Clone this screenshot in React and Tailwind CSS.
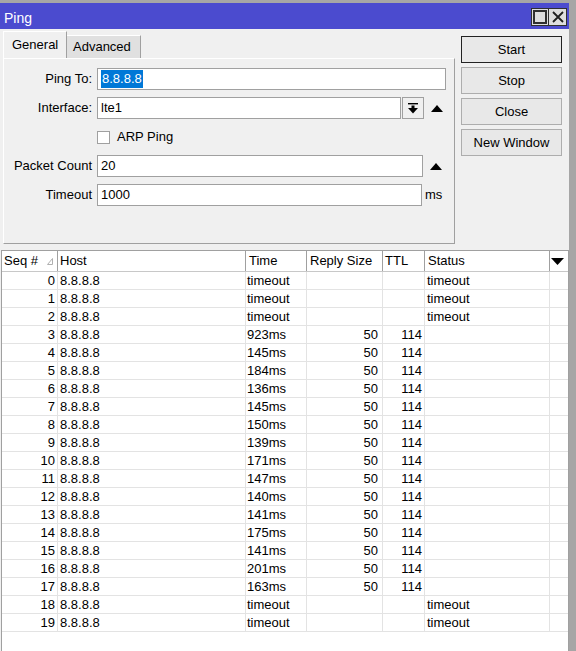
const results = [
  [0, null],
  [1, null],
  [2, null],
  [3, "923ms"],
  [4, "145ms"],
  [5, "184ms"],
  [6, "136ms"],
  [7, "145ms"],
  [8, "150ms"],
  [9, "139ms"],
  [10, "171ms"],
  [11, "147ms"],
  [12, "140ms"],
  [13, "141ms"],
  [14, "175ms"],
  [15, "141ms"],
  [16, "201ms"],
  [17, "163ms"],
  [18, null],
  [19, null],
];

function UpTriangle() {
  return (
    <svg width="12" height="7" viewBox="0 0 12 7" className="shrink-0">
      <path d="M0 7 L6 0 L12 7 Z" fill="#000" />
    </svg>
  );
}

function Field({ label, children }) {
  return (
    <div className="flex h-[22px] items-center">
      <div className="w-[88px] shrink-0 text-right">{label}</div>
      <div className="ml-[5px] flex h-full items-center">{children}</div>
    </div>
  );
}

function Box({ className, children }) {
  return (
    <div className={"flex h-full items-center border border-[#a0a0a0] bg-white pl-[3px] " + className}>
      {children}
    </div>
  );
}

export default function App() {
  return (
    <div className="h-[651px] w-[576px] overflow-hidden border-t-[3px] border-r-[7px] border-[#a6a6a6] bg-[#f0f0f0] font-['Liberation_Sans',Arial,sans-serif] text-[13px] text-black">
      {/* title bar */}
      <div className="flex h-[26px] items-start justify-between bg-[#4b4bcf]">
        <div className="pl-[4px] pt-[7px] text-[14px] leading-[16px] text-white">Ping</div>
        <div className="mr-[2px] mt-[5px] flex">
          <div className="flex h-[18px] w-[18px] items-center justify-center border border-[#303030] bg-[#dedede]">
            <svg width="14" height="14" viewBox="0 0 14 14">
              <rect x="1" y="1" width="12" height="12" fill="none" stroke="#303030" strokeWidth="2" />
            </svg>
          </div>
          <div className="flex h-[18px] w-[18px] items-center justify-center border border-l-0 border-[#303030] bg-[#dedede]">
            <svg width="12" height="12" viewBox="0 0 12 12">
              <path d="M1 1 L11 11 M11 1 L1 11" stroke="#202020" strokeWidth="1.8" />
            </svg>
          </div>
        </div>
      </div>

      {/* top area */}
      <div className="flex pl-[3px]">
        <div className="w-[452px] pt-[2px]">
          <div className="flex h-[27px] items-end">
            <div className="flex h-[27px] w-[64px] items-center border-l border-t border-r border-t-white border-l-white border-r-[#a0a0a0] pl-[8px]">
              General
            </div>
            <div className="flex h-[23px] w-[74px] items-center border-t border-r border-t-white border-r-[#a0a0a0] bg-[#e0e0e0] pl-[6px]">
              Advanced
            </div>
          </div>
          <div className="flex h-[186px] flex-col gap-[7px] border border-l-white border-t-white border-r-[#a0a0a0] border-b-[#a0a0a0] pt-[9px]">
            <Field label="Ping To:">
              <Box className="w-[349px]">
                <span className="bg-[#0078d7] px-[1px] leading-[18px] text-white">8.8.8.8</span>
              </Box>
            </Field>
            <Field label="Interface:">
              <Box className="w-[304px]">lte1</Box>
              <div className="ml-[1px] flex h-full w-[22px] items-center justify-center border border-[#a0a0a0] bg-[#f0f0f0]">
                <svg width="10" height="11" viewBox="0 0 10 11">
                  <rect x="0" y="0" width="10" height="1.4" fill="#000" />
                  <rect x="3.5" y="2.5" width="3" height="3" fill="#000" />
                  <path d="M0 5 L10 5 L5 10.5 Z" fill="#000" />
                </svg>
              </div>
              <div className="ml-[7px]">
                <UpTriangle />
              </div>
            </Field>
            <div className="flex h-[22px] items-center pl-[93px]">
              <div className="h-[13px] w-[13px] border border-[#a0a0a0] bg-white" />
              <span className="ml-[7px]">ARP Ping</span>
            </div>
            <Field label="Packet Count">
              <Box className="w-[326px]">20</Box>
              <div className="ml-[7px]">
                <UpTriangle />
              </div>
            </Field>
            <Field label="Timeout">
              <Box className="w-[325px]">1000</Box>
              <span className="ml-[3px]">ms</span>
            </Field>
          </div>
        </div>

        <div className="ml-[6px] flex w-[101px] flex-col gap-[4px] pt-[7px]">
          <div className="flex h-[27px] items-center justify-center border border-[#222] bg-[#e8e8e8]">Start</div>
          <div className="flex h-[27px] items-center justify-center border border-[#adadad] bg-[#e8e8e8]">Stop</div>
          <div className="flex h-[27px] items-center justify-center border border-[#adadad] bg-[#e8e8e8]">Close</div>
          <div className="flex h-[27px] items-center justify-center border border-[#adadad] bg-[#e8e8e8]">New Window</div>
        </div>
      </div>

      {/* table */}
      <div className="ml-[1px] mt-[6px] h-[420px] w-[568px] border-l border-r border-t border-[#a0a0a0] bg-white">
        <div className="flex h-[21px] border-b border-[#c8c8c8] leading-[20px]">
          <div className="flex w-[56px] items-center justify-between border-r border-[#a0a0a0] pl-[2px] pr-[4px]">
            <span>Seq #</span>
            <svg width="6" height="7" viewBox="0 0 6 7">
              <path d="M0.5 6.5 L5.5 0.5 L5.5 6.5 Z" fill="none" stroke="#b0b0b0" strokeWidth="1" />
            </svg>
          </div>
          <div className="w-[188px] border-r border-[#a0a0a0] pl-[2px]">Host</div>
          <div className="w-[61px] border-r border-[#a0a0a0] pl-[3px]">Time</div>
          <div className="w-[76px] border-r border-[#a0a0a0] pl-[3px]">Reply Size</div>
          <div className="w-[42px] border-r border-[#a0a0a0] pl-[2px]">TTL</div>
          <div className="w-[125px] border-r border-[#a0a0a0] pl-[3px]">Status</div>
          <div className="flex w-[18px] items-center pl-[1px]">
            <svg width="13" height="7" viewBox="0 0 13 7">
              <path d="M0 0 L13 0 L6.5 7 Z" fill="#000" />
            </svg>
          </div>
        </div>
        {results.map(([seq, time]) => (
          <div key={seq} className="flex h-[18px] border-b border-[#e3e3e3] leading-[17px]">
            <div className="w-[56px] border-r border-[#e3e3e3] pr-[2px] text-right">{seq}</div>
            <div className="w-[188px] border-r border-[#e3e3e3] pl-[2px]">8.8.8.8</div>
            <div className="w-[61px] border-r border-[#e3e3e3] pl-[1px]">{time ?? "timeout"}</div>
            <div className="w-[76px] border-r border-[#e3e3e3] pr-[4px] text-right">{time ? "50" : ""}</div>
            <div className="w-[42px] border-r border-[#e3e3e3] pr-[2px] text-right">{time ? "114" : ""}</div>
            <div className="w-[125px] border-r border-[#e3e3e3] pl-[2px]">{time ? "" : "timeout"}</div>
            <div className="w-[18px]" />
          </div>
        ))}
      </div>
    </div>
  );
}
